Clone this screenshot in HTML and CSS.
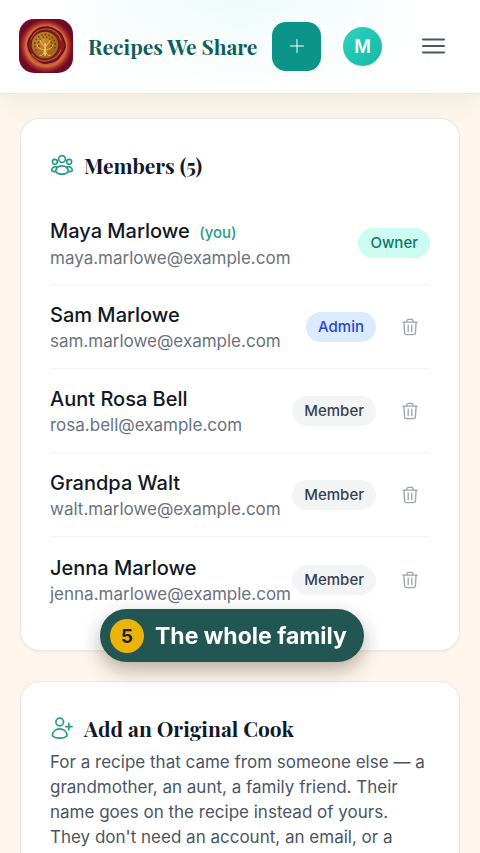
FILE: index.html
```html
<!DOCTYPE html>
<html lang="en">
<head>
<meta charset="utf-8">
<meta name="viewport" content="width=device-width, initial-scale=1">
<title>Recipes We Share</title>
<link rel="stylesheet" href="styles.css">
</head>
<body>
<svg class="defs" aria-hidden="true">
  <symbol id="trash" viewBox="0 0 20 20">
    <path d="M2 4.500h16M6.500 4.500V3.500Q6.500 1.500 8.500 1.500h3Q13.500 1.500 13.500 3.500V4.500M3.200 4.500l.8 12Q4.200 18.500 6.200 18.500h7.600q2 0 2.200-2l.8-12M8 8v7M12 8v7"/>
  </symbol>
</svg>
<div class="app">
  <header class="topbar">
    <a class="brand" href="#">
      <svg class="logo" viewBox="0 0 54 54" aria-hidden="true">
        <defs>
          <radialGradient id="wax"><stop offset=".6" stop-color="#b83a28"/><stop offset=".76" stop-color="#d0703c"/><stop offset=".88" stop-color="#a82a2a"/><stop offset="1" stop-color="#750b27"/></radialGradient>
          <radialGradient id="gold" cx=".4" cy=".35"><stop offset="0" stop-color="#d08f32"/><stop offset="1" stop-color="#a8651f"/></radialGradient>
        </defs>
        <rect width="54" height="54" rx="15" fill="#700a25"/>
        <circle cx="27" cy="27" r="26.500" fill="url(#wax)"/>
        <path d="M27 8c6-1 9 3 13 5 4 3 4 7 6 12 1 6-3 9-5 12-3 5-8 6-13 7-6 1-10-3-13-6-4-4-6-8-6-13 0-6 4-9 6-12 3-3 7-5 12-5z" fill="#8c1c22" stroke="#640f1c" stroke-width="1.500"/>
        <path d="M12 20c3-7 9-10 16-10 7 0 12 5 14 11M13 35c5 7 12 8 18 6 6-2 9-5 11-10" fill="none" stroke="#c4503e" stroke-width="1.200"/>
        <circle cx="26" cy="26" r="14" fill="url(#gold)" stroke="#5d2213" stroke-width="1.300"/>
        <g fill="none" stroke="#eebb58" stroke-linecap="round">
          <path stroke-width="2" d="M26 36V25"/>
          <path d="M21 36.500c3 0 4-2 4-4M31 36.500c-3 0-4-2-4-4M25 31c-4-1-6-2-7-5M27 31c4-1 6-2 7-5M25 27c-2-2-4-4-4-7M27 27c2-2 4-4 4-7"/>
        </g>
        <path fill="none" stroke="#784112" stroke-linecap="round" stroke-width="1.800" stroke-dasharray=".1 3.500" d="M17 31a10.300 10.300 0 1 1 18 0M20 27a6.500 6.500 0 1 1 12 0"/>
      </svg>
      <span class="brand-name">Recipes We Share</span>
    </a>
    <button class="add" type="button" aria-label="Add recipe">
      <svg viewBox="0 0 20 20" aria-hidden="true"><path d="M10 3.500v13M3.500 10h13"/></svg>
    </button>
    <button class="avatar" type="button">M</button>
    <button class="menu" type="button" aria-label="Menu">
      <svg viewBox="0 0 24 24" aria-hidden="true"><path d="M2 5.500h21M2 12h21M2 18.500h21"/></svg>
    </button>
  </header>

  <main class="content">
    <section class="card">
      <h2 class="card-title card-title-list">
        <svg class="title-icon" viewBox="0 0 24 24" aria-hidden="true"><circle cx="12" cy="5.500" r="3.700"/><circle cx="4.200" cy="8.500" r="2.700"/><circle cx="19.800" cy="8.500" r="2.700"/><path d="M5 19c1-8 13-8 14 0-3 4-11 4-14 0zM6 14c-3-.7-5 1-5.200 4 1.200 1 2.700 1.400 4.200 1M18 14c3-.7 5 1 5.200 4-1.200 1-2.700 1.400-4.200 1"/></svg>
        Members (5)
      </h2>
      <ul class="members">
        <li class="member">
          <div class="person"><p class="name">Maya Marlowe <span class="you">(you)</span></p><p class="email">maya.marlowe@example.com</p></div>
          <span class="badge owner">Owner</span>
        </li>
        <li class="member">
          <div class="person"><p class="name">Sam Marlowe</p><p class="email">sam.marlowe@example.com</p></div>
          <span class="badge admin">Admin</span>
          <button class="remove" type="button" aria-label="Remove Sam Marlowe"><svg aria-hidden="true"><use href="#trash"/></svg></button>
        </li>
        <li class="member">
          <div class="person"><p class="name">Aunt Rosa Bell</p><p class="email">rosa.bell@example.com</p></div>
          <span class="badge">Member</span>
          <button class="remove" type="button" aria-label="Remove Aunt Rosa Bell"><svg aria-hidden="true"><use href="#trash"/></svg></button>
        </li>
        <li class="member">
          <div class="person"><p class="name">Grandpa Walt</p><p class="email">walt.marlowe@example.com</p></div>
          <span class="badge">Member</span>
          <button class="remove" type="button" aria-label="Remove Grandpa Walt"><svg aria-hidden="true"><use href="#trash"/></svg></button>
        </li>
        <li class="member">
          <div class="person"><p class="name">Jenna Marlowe</p><p class="email">jenna.marlowe@example.com</p></div>
          <span class="badge">Member</span>
          <button class="remove" type="button" aria-label="Remove Jenna Marlowe"><svg aria-hidden="true"><use href="#trash"/></svg></button>
        </li>
      </ul>
    </section>

    <section class="card">
      <h2 class="card-title">
        <svg class="title-icon" viewBox="0 0 24 24" aria-hidden="true"><circle cx="9.500" cy="5.500" r="4.200"/><path d="M1.500 20.500c.5-10 15.500-10 16 0-4 3.500-12 3.500-16 0zM19.500 7v7M16 10.500h7"/></svg>
        Add an Original Cook
      </h2>
      <p class="card-text">For a recipe that came from someone else — a grandmother, an aunt, a family friend. Their name goes on the recipe instead of yours. They don't need an account, an email, or a</p>
    </section>
  </main>

  <div class="step"><span class="step-number">5</span>The whole family</div>
</div>
</body>
</html>
```

FILE: styles.css
```css
* {
  box-sizing: border-box;
}

body {
  margin: 0;
  background: #fef6ec;
  font-family: Inter, "Liberation Sans", sans-serif;
}

h2, p, ul {
  margin: 0;
  padding: 0;
}

button {
  display: grid;
  place-items: center;
  padding: 0;
  border: 0;
  background: none;
  font: inherit;
}

svg {
  display: block;
  fill: none;
  stroke: currentColor;
  stroke-linecap: round;
  stroke-linejoin: round;
}

.defs {
  display: none;
}

.app {
  height: 100vh;
  overflow: hidden;
}

.topbar {
  display: flex;
  align-items: center;
  padding: 19px 35px 20px 19px;
  border-bottom: 1px solid #d6f5e6;
  background: linear-gradient(to bottom, transparent, #fff), linear-gradient(to right, #fff 10%, #eefafa 50%, #fff 90%);
  box-shadow: 0 8px 24px rgba(60, 90, 60, 0.08);
}

.brand {
  display: flex;
  flex: 1;
  align-items: center;
  gap: 15px;
  color: #115e59;
  text-decoration: none;
}

.logo {
  flex: none;
  width: 54px;
  height: 54px;
  stroke: none;
}

.brand-name {
  font: 700 21px/32px "Playfair Display", "Liberation Serif", serif;
  white-space: nowrap;
}

.add {
  width: 49px;
  height: 49px;
  margin-right: 22px;
  border-radius: 14px;
  background: #0d9488;
  color: #fff;
}

.add svg {
  width: 20px;
  height: 20px;
}

.avatar {
  width: 39px;
  height: 39px;
  margin-right: 39px;
  border-radius: 50%;
  background: linear-gradient(135deg, #2dd4bf, #14b8a6);
  color: #fff;
  font-size: 18px;
  font-weight: 600;
}

.menu {
  color: #4b5563;
}

.menu svg {
  width: 24px;
  height: 24px;
  stroke-width: 2;
}

.content {
  display: grid;
  gap: 30px;
  padding: 24px 20px;
}

.card {
  padding: 30px 29px 29px;
  border: 1px solid #ebe9e5;
  border-radius: 20px;
  background: #fff;
  box-shadow: 0 1px 3px rgba(0, 0, 0, 0.05);
}

.card-title {
  display: flex;
  align-items: center;
  gap: 11px;
  margin-bottom: 6px;
  color: #111827;
  font: 700 21px/32px "Playfair Display", "Liberation Serif", serif;
}

.card-title-list {
  margin-bottom: 20px;
}

.title-icon {
  width: 22px;
  height: 22px;
  margin-left: 1px;
  color: #289b8c;
  stroke-width: 1.8;
}

.members {
  list-style: none;
}

.member {
  display: flex;
  align-items: center;
  height: 84px;
  padding-top: 1px;
  border-bottom: 1px solid #f3f4f6;
}

.member:last-child {
  border-bottom: 0;
}

.person {
  flex: 1;
  min-width: 0;
  white-space: nowrap;
}

.name {
  color: #111827;
  font-size: 20px;
  font-weight: 500;
  line-height: 29px;
}

.you {
  margin-left: 4px;
  color: #289b8c;
  font-size: 15px;
}

.email {
  color: #6b7280;
  font-size: 17px;
  line-height: 23px;
}

.badge {
  padding: 0 12px;
  border-radius: 15px;
  background: #f3f4f6;
  color: #374151;
  font-size: 15px;
  font-weight: 500;
  line-height: 30px;
}

.owner {
  background: #ccfbf1;
  color: #0f766e;
}

.admin {
  background: #dbeafe;
  color: #2849c4;
}

.remove {
  width: 40px;
  height: 40px;
  margin-left: 14px;
  color: #9ca3af;
}

.remove svg {
  width: 18px;
  height: 18px;
  stroke-width: 1.5;
}

.card-text {
  color: #4b5563;
  font-size: 17px;
  line-height: 25px;
}

.step {
  position: fixed;
  bottom: 191px;
  left: 100px;
  display: flex;
  align-items: center;
  gap: 11px;
  padding: 10px 17px 9px 10px;
  border-radius: 27px;
  background: #225652;
  box-shadow: 0 8px 20px rgba(40, 20, 0, 0.32);
  color: #fff;
  font-size: 23px;
  font-weight: 700;
  white-space: nowrap;
}

.step-number {
  display: grid;
  place-items: center;
  width: 34px;
  height: 34px;
  border-radius: 50%;
  background: #eab308;
  color: #1c1917;
  font-size: 19px;
}
```
